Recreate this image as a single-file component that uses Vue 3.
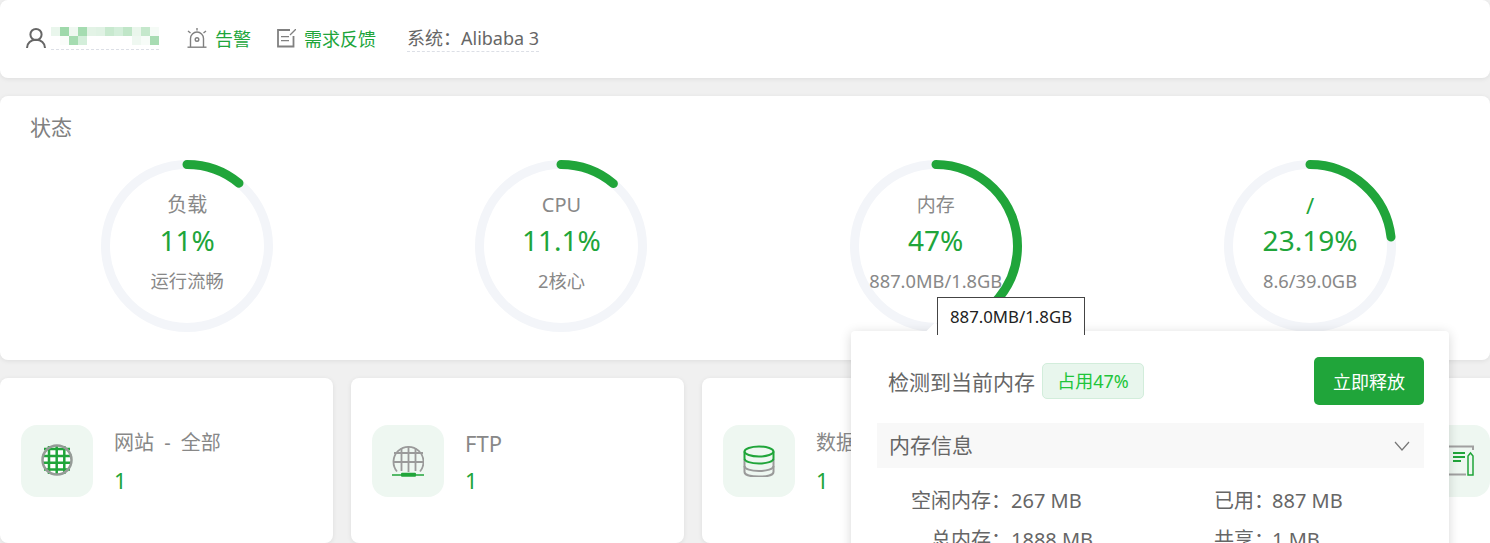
<script setup>
const COLON = '\uFF1A'

const gauges = [
  { title: '负载', pct: 11, value: '11%', sub: '运行流畅' },
  { title: 'CPU', pct: 11.1, value: '11.1%', sub: '2核心' },
  { title: '内存', pct: 47, value: '47%', sub: '887.0MB/1.8GB', small: true },
  { title: '/', pct: 23.19, value: '23.19%', sub: '8.6/39.0GB', path: true },
]

const R = 81.5
const C = 2 * Math.PI * R
const dash = (pct) => `${(C * pct) / 100} ${C}`

// the last two cards sit behind the popup or past the window edge, only the icon shows
const cards = [
  { title: '网站 - 全部', icon: 'site' },
  { title: 'FTP', icon: 'ftp', latin: true },
  { title: '数据库', icon: 'db' },
  { icon: 'db' },
  { icon: 'plan' },
]

const mosaic = [
  '#e9f6ec', '#9fd9ab', '#eff8f1', '#a5dcb1', '#e3f3e6', '#e0f2e4', '#c8e9cf', '#d3eeda', '#c0e6c8', '#eaf6ec', '#c5e8cc', '#f5fbf6',
  '#ffffff', '#fafdfa', '#a5dcb1', '#d3eeda', '#ffffff', '#ffffff', '#ffffff', '#ffffff', '#ffffff', '#eff8f1', '#f7fcf8', '#a8dcb3',
]

const memInfo = [
  { label: '空闲内存' + COLON, value: '267 MB', label2: '已用' + COLON, value2: '887 MB' },
  { label: '总内存' + COLON, value: '1888 MB', label2: '共享' + COLON, value2: '1 MB' },
]
</script>

<template>
  <div class="page">
    <header class="panel topbar">
      <div class="top-item user">
        <svg class="ico" width="22" height="22" viewBox="0 0 22 22" fill="none" stroke="#666" stroke-width="2">
          <circle cx="11" cy="7.5" r="5.6" />
          <path d="M2 21c0-5 4-8.2 9-8.2s9 3.2 9 8.2" />
        </svg>
        <div class="mosaic">
          <span v-for="(c, i) in mosaic" :key="i" :style="{ background: c }"></span>
        </div>
      </div>
      <a class="top-item link alarm">
        <svg class="ico" width="20" height="20" viewBox="0 0 20 20" fill="none" stroke="#808080" stroke-width="1.4">
          <path d="M0.5 19.2h19" />
          <path d="M3.500 19V10.500a6.500 6.500 0 0 1 13 0V19" />
          <circle cx="10" cy="11.500" r="1.800" />
          <path d="M10 0v2.500M1 3l2.500 2M19 3l-2.500 2" />
        </svg>
        告警
      </a>
      <a class="top-item link feedback">
        <svg class="ico" width="19" height="19" viewBox="0 0 19 19" fill="none" stroke="#808080" stroke-width="1.800">
          <path d="M13 1H1v16.500h15.500V7" />
          <path d="M4 7.700h8M4 11.700h8" stroke-width="1.300" />
          <path d="M13 6l6-6" stroke-width="1.300" />
        </svg>
        需求反馈
      </a>
      <div class="top-item system"><span>系统{{ COLON }}</span><span>Alibaba 3</span></div>
    </header>

    <section class="panel status">
      <h2 class="status-title">状态</h2>
      <div class="gauges">
        <div v-for="g in gauges" :key="g.title" class="gauge-cell">
          <div class="gauge">
            <svg width="172" height="172" viewBox="0 0 172 172">
              <circle cx="86" cy="86" :r="R" fill="none" stroke="#f3f5f9" stroke-width="9" />
              <circle
                cx="86" cy="86" :r="R" fill="none" stroke="#20a53a" stroke-width="9" stroke-linecap="round"
                :stroke-dasharray="dash(g.pct)" transform="rotate(-90 86 86)"
              />
            </svg>
            <div class="gauge-text">
              <div class="g-title" :class="{ small: g.small, path: g.path }">{{ g.title }}</div>
              <div class="g-value">{{ g.value }}</div>
              <div class="g-sub">{{ g.sub }}</div>
            </div>
          </div>
        </div>
      </div>
    </section>

    <section class="cards">
      <div v-for="(c, i) in cards" :key="i" class="card">
        <div class="card-icon">
          <svg v-if="c.icon === 'site'" width="32" height="34" viewBox="0 0 32 34" fill="none">
            <circle cx="16" cy="16" r="14.500" fill="#fff" />
            <path d="M3 5h26M1 12h30M1 18.700h30M3 25.400h26M8 2v28M15.700 1v30M23.300 2v28" stroke="#20a53a" stroke-width="2.500" />
            <circle cx="16" cy="16" r="14.500" stroke="#959b97" stroke-width="2.500" />
          </svg>
          <svg v-else-if="c.icon === 'ftp'" width="32" height="32" viewBox="0 0 32 32" fill="none">
            <path d="M5 26.500a15 15 0 1 1 23 0" stroke="#9a9a9a" stroke-width="1.800" />
            <path d="M2 8h29M1.500 17h30M9.500 3v23M16.500 1v26M23.500 3v23" stroke="#9a9a9a" stroke-width="1.800" />
            <path d="M0 30h33" stroke="#20a53a" stroke-width="1.500" />
            <rect x="9" y="27.700" width="15" height="4" rx="1" fill="#20a53a" />
          </svg>
          <svg v-else-if="c.icon === 'db'" width="32" height="32" viewBox="0 0 32 32" fill="none">
            <path d="M1.500 14v7c0 3 6.500 5 14.500 5s14.500-2 14.500-5v-7" stroke="#9a9a9a" stroke-width="2" />
            <path d="M1.500 21v6c0 3 6.500 4.600 14.500 4.600s14.500-1.600 14.500-4.600v-6" stroke="#9a9a9a" stroke-width="2" />
            <ellipse cx="16" cy="6.500" rx="14.500" ry="5" stroke="#20a53a" stroke-width="2" />
            <path d="M1.500 6.500v7c0 3 6.500 5 14.500 5s14.500-2 14.500-5v-7" stroke="#20a53a" stroke-width="2" />
          </svg>
          <svg v-else width="40" height="32" viewBox="-8 0 40 32" fill="none">
            <path d="M31 5V1.500H-8V29.500H24" stroke="#a0a0a0" stroke-width="2" />
            <path d="M11 8h12M11 12h12M11 16h8" stroke="#20a53a" stroke-width="2" />
            <path d="M26 30V11l2.500-3 2.500 3v19z" stroke="#20a53a" stroke-width="1.500" />
          </svg>
        </div>
        <div v-if="c.title" class="card-body">
          <div class="card-title" :class="{ latin: c.latin }">{{ c.title }}</div>
          <div class="card-num">1</div>
        </div>
      </div>
    </section>

    <div class="tooltip">887.0MB/1.8GB</div>

    <div class="popup">
      <span class="popup-arrow"></span>
      <div class="popup-head">
        <span class="popup-label">检测到当前内存</span>
        <span class="tag">占用47%</span>
        <button class="release">立即释放</button>
      </div>
      <div class="collapse-head">
        <span class="collapse-title">内存信息</span>
        <svg width="16" height="10" viewBox="0 0 16 10" fill="none" stroke="#777" stroke-width="1.200">
          <path d="M1 1l7 8 7-8" />
        </svg>
      </div>
      <div v-for="row in memInfo" :key="row.label" class="mem-row">
        <div class="mem-label">{{ row.label }}</div>
        <div>{{ row.value }}</div>
        <div class="mem-label2">{{ row.label2 }}</div>
        <div>{{ row.value2 }}</div>
      </div>
    </div>
  </div>
</template>

<style>
html, body {
  margin: 0;
  height: 100%;
  overflow: hidden;
  background: #f0f0f0;
}
</style>

<style scoped>
.page {
  position: relative;
  width: 1490px;
  height: 543px;
  overflow: hidden;
  background: #f0f0f0;
  font-family: "Noto Sans", "Noto Sans CJK SC", sans-serif;
  color: #666;
}

.panel {
  background: #fff;
  border-radius: 8px;
  box-shadow: 0 1px 5px rgba(0, 0, 0, 0.08);
}

.topbar {
  display: flex;
  align-items: center;
  height: 78px;
  padding: 0 0 2px 25px;
  box-sizing: border-box;
  font-size: 18px;
}

.top-item {
  display: flex;
  align-items: center;
}

.user {
  width: 162px;
}

.mosaic {
  display: grid;
  grid-template-columns: repeat(12, 9px);
  grid-auto-rows: 9px;
  margin-left: 4px;
  padding-bottom: 4px;
  border-bottom: 1px dashed #dcdfe6;
}

.link {
  color: #20a53a;
  gap: 8px;
}

.alarm {
  width: 90px;
}

.feedback {
  width: 130px;
}

.system {
  line-height: 26px;
  border-bottom: 1px dashed #dcdfe6;
  color: #666;
}

.status {
  height: 264px;
  margin-top: 18px;
  padding-top: 17px;
  box-sizing: border-box;
}

.status-title {
  margin: 0 0 0 30px;
  font-size: 21px;
  font-weight: 400;
  line-height: 29px;
  color: #808080;
}

.gauges {
  display: grid;
  grid-template-columns: repeat(4, 374.3px);
  margin-top: 18px;
}

.gauge-cell {
  display: flex;
  justify-content: center;
}

.gauge {
  position: relative;
  width: 172px;
  height: 172px;
}

.gauge svg {
  display: block;
}

.gauge-text {
  position: absolute;
  inset: 0;
  display: flex;
  flex-direction: column;
  align-items: center;
  white-space: nowrap;
  color: #888;
}

.g-title {
  height: 30px;
  margin-top: 30px;
  font-size: 20px;
  line-height: 30px;
}

.g-title.small {
  font-size: 19px;
}

.g-title.path {
  color: #20a53a;
  font-size: 22px;
}

.g-value {
  margin-top: 1px;
  font-size: 28px;
  line-height: 38px;
  color: #20a53a;
}

.g-sub {
  margin-top: 9px;
  font-size: 18.3px;
  line-height: 26px;
}

.cards {
  display: flex;
  gap: 18px;
  margin-top: 18px;
}

.card {
  flex: 0 0 333px;
  display: flex;
  height: 165px;
  padding: 47px 0 0 21px;
  box-sizing: border-box;
  background: #fff;
  border-radius: 8px;
  box-shadow: 0 1px 5px rgba(0, 0, 0, 0.08);
}

.card:last-child {
  margin-left: -7px;
}

.card-icon {
  display: flex;
  align-items: center;
  justify-content: center;
  width: 72px;
  height: 72px;
  background: #eef7f1;
  border-radius: 16px;
}

.card-body {
  margin-left: 21px;
}

.card-title {
  height: 34px;
  margin-top: 1px;
  font-size: 20px;
  line-height: 34px;
  word-spacing: 5px;
  color: #888;
  white-space: nowrap;
}

.card-title.latin {
  font-size: 22px;
}

.card-num {
  margin-top: 3px;
  font-size: 22px;
  line-height: 34px;
  color: #20a53a;
}

.tooltip {
  position: absolute;
  z-index: 3;
  left: 937px;
  top: 297px;
  width: 148px;
  height: 38px;
  box-sizing: border-box;
  padding-top: 8px;
  background: #fff;
  border: 1px solid #444;
  border-bottom: 0;
  font-size: 16.8px;
  line-height: 22px;
  text-align: center;
  color: #222;
}

.popup {
  position: absolute;
  z-index: 2;
  left: 851px;
  top: 331px;
  width: 598px;
  height: 260px;
  box-sizing: border-box;
  padding: 26px 25px 0 26px;
  background: #fff;
  border-radius: 4px;
  box-shadow: 0 2px 12px rgba(0, 0, 0, 0.16);
}

.popup-arrow {
  position: absolute;
  left: 78px;
  top: -6px;
  width: 12px;
  height: 12px;
  background: #fff;
  transform: rotate(45deg);
}

.popup-head {
  position: relative;
  display: flex;
  align-items: center;
  height: 48px;
  padding-left: 11px;
}

.popup-label {
  font-size: 21px;
  color: #666;
}

.tag {
  margin-left: 7px;
  width: 102px;
  height: 36px;
  box-sizing: border-box;
  background: #e8f6ed;
  border: 1px solid #d2eddb;
  border-radius: 5px;
  font-size: 18px;
  line-height: 34px;
  text-align: center;
  color: #20c53a;
}

.release {
  margin-left: auto;
  width: 110px;
  height: 48px;
  padding: 0;
  background: #20a53a;
  border: 0;
  border-radius: 5px;
  font-family: inherit;
  font-size: 18px;
  color: #fff;
}

.collapse-head {
  display: flex;
  align-items: center;
  justify-content: space-between;
  height: 45px;
  margin-top: 18px;
  padding: 0 14px 0 12px;
  background: #f8f8f8;
  font-size: 21px;
  color: #666;
}

.collapse-title {
  margin-top: -3px;
}

.mem-row {
  display: grid;
  grid-template-columns: 134px 203px 58px 1fr;
  margin-top: 14px;
  font-size: 20px;
  line-height: 25px;
  color: #666;
  white-space: nowrap;
}

.collapse-head + .mem-row {
  margin-top: 20px;
}

.mem-label {
  text-align: right;
}
</style>
